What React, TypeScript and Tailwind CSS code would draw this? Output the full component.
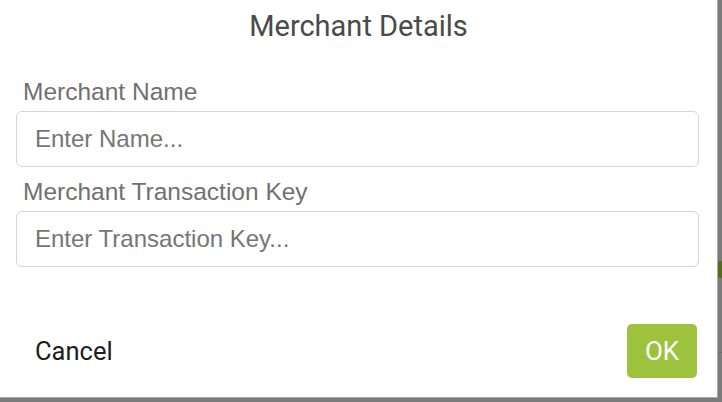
import React from "react";

export default function App() {
  return (
    <div className="relative w-[722px] h-[402px] overflow-hidden bg-[#7b7b7b]">
      {/* something behind the overlay */}
      <div className="absolute left-[714px] top-[261px] w-[16px] h-[17px] rounded-full bg-[#556b1f]" />
      <div className="absolute left-[718px] top-[352px] w-[10px] h-px bg-[#6a6a6a]" />
      <div className="relative flex flex-col w-[718px] h-[398px] bg-white border-r border-b border-[#a9a9a9]">
        <h1
          className="pt-[8px] text-center text-[29px] leading-[36px] font-normal text-[#4a4a4a]"
          style={{ fontFamily: "Roboto, 'Liberation Sans', sans-serif" }}
        >
          Merchant Details
        </h1>
        <div
          className="flex flex-col mt-[34px] pl-[16px] pr-[18px]"
          style={{ fontFamily: "'Liberation Sans', Arial, sans-serif" }}
        >
          <label className="pl-[7px] text-[24.5px] leading-[28px] text-[#717171]">
            Merchant Name
          </label>
          <input
            className="mt-[5px] h-[56px] w-full rounded-[6px] border border-[#d5d5d5] pl-[18px] text-[24px] text-[#333] placeholder:text-[#767676] outline-none"
            placeholder="Enter Name..."
          />
          <label className="mt-[11px] pl-[7px] text-[24.5px] leading-[28px] text-[#717171]">
            Merchant Transaction Key
          </label>
          <input
            className="mt-[5px] h-[56px] w-full rounded-[6px] border border-[#d5d5d5] pl-[18px] text-[24px] text-[#333] placeholder:text-[#767676] outline-none"
            placeholder="Enter Transaction Key..."
          />
        </div>
        <div
          className="mt-auto mb-[19px] flex items-center justify-between pl-[35px] pr-[20px]"
          style={{ fontFamily: "Roboto, 'Liberation Sans', sans-serif" }}
        >
          <button className="text-[25.5px] leading-[30px] text-[#1e1e1e]">Cancel</button>
          <button className="flex h-[54px] w-[70px] items-center justify-center rounded-[5px] bg-[#9dc23d] text-[26px] text-white">
            OK
          </button>
        </div>
      </div>
    </div>
  );
}
